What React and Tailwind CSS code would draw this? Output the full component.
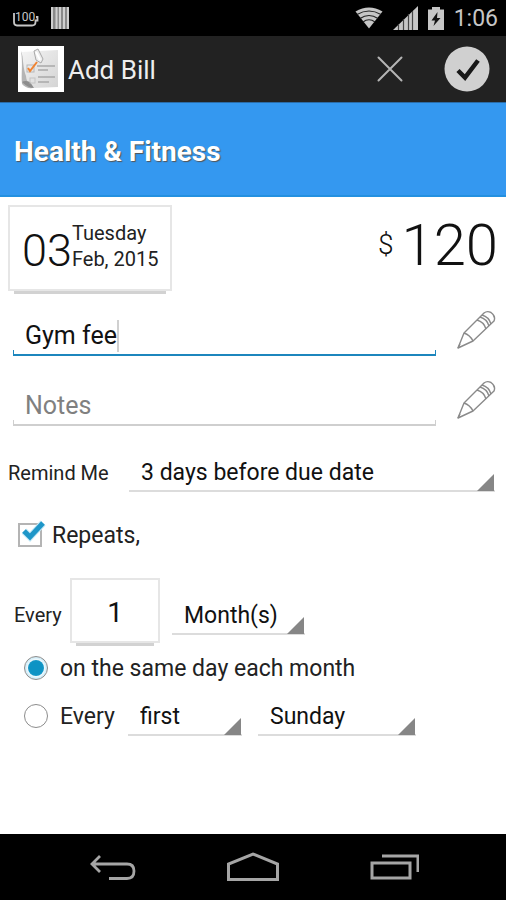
import { useState } from 'react';

function StatusBar() {
  return (
    <div className="flex h-9 items-center justify-between bg-black pl-3 pr-2 text-[#c6c6c6]">
      <div className="flex items-center gap-3">
        <svg width="27" height="20" viewBox="0 0 27 20" aria-hidden="true">
          <path d="M2 5V14Q2 17.500 5 17.500H20Q23.500 17.500 23.500 14V12.500H25.500V9H24" fill="none" stroke="currentColor" strokeWidth="1.800" />
          <text x="3" y="13" fontSize="12" fill="currentColor" fontFamily="Roboto, sans-serif">100</text>
        </svg>
        <svg width="18" height="22" viewBox="0 0 18 22" aria-hidden="true">
          <path d="M0 0H18V22H0Z" fill="#8a8a8a" />
          <path d="M1 0V22M5.500 0V22M9 0V22M13 0V22M17 0V22" stroke="#d0d0d0" strokeWidth="2" />
        </svg>
      </div>
      <div className="flex items-center gap-2.5">
        {/* wifi */}
        <svg width="28" height="22" viewBox="0 0 28 22" aria-hidden="true">
          <path d="M0.500 4.500Q14 -3.500 27.500 4.500L14 21.500Z" fill="currentColor" />
          <path d="M2 7.500Q14 0.500 26 7.500M5 11.500Q14 5.500 23 11.500M8 15Q14 10.500 20 15" fill="none" stroke="#222" strokeWidth="1.200" />
        </svg>
        {/* signal */}
        <svg width="25" height="24" viewBox="0 0 25 24" aria-hidden="true">
          <path d="M0 24L25 0V24Z" fill="currentColor" />
          <path d="M5.500 18V24M10.500 13V24M15.500 8V24M19.500 5V24" stroke="#444" strokeWidth="1.200" />
        </svg>
        <svg width="16" height="23" viewBox="0 0 16 23" aria-hidden="true">
          <path d="M4 2.500V0H12V2.500H16V23H0V2.500Z" fill="currentColor" />
          <path d="M9.500 5L3.500 13.500H7L5.500 19L12.500 11H9Z" fill="#111" />
        </svg>
        <span className="pt-0.5 text-[23px] leading-8">1:06</span>
      </div>
    </div>
  );
}

function AppIcon() {
  return (
    <svg width="46" height="46" viewBox="0 0 46 46" aria-hidden="true">
      <defs>
        <linearGradient id="paper" x1="0" y1="0" x2="1" y2="1">
          <stop offset="0" stopColor="#f4f4f4" />
          <stop offset="1" stopColor="#d4d4d4" />
        </linearGradient>
      </defs>
      <rect width="46" height="46" fill="#fff" />
      <path d="M3 5C5 17 3 29 4 38Q8 43 15 42C10 37 9 30 9 21Z" fill="#b5b5b5" />
      <path d="M4 6L40 4V41L15 42Q8 36 8 30C5 22 5 12 4 6Z" fill="url(#paper)" />
      <path d="M4 36Q10 42 16 42L12 36Q7 34 4 36Z" fill="#8d8d8d" />
      <path d="M19 20H37M20 24H30M20 31H37M20 36H31" stroke="#a9a9a9" strokeWidth="1.500" />
      <rect x="9" y="19" width="7" height="7" fill="none" stroke="#b8b8b8" />
      <rect x="12" y="32" width="5" height="5" fill="none" stroke="#c4c4c4" />
      <path d="M10 22L12 25L19 16" fill="none" stroke="#f08331" strokeWidth="2" />
      <path d="M16 5L20 3L25 13L23 17L18 14Z" fill="#eee" stroke="#a8a8a8" />
      <path d="M18 6L22 14" stroke="#fff" strokeWidth="2" />
    </svg>
  );
}

function PencilIcon() {
  return (
    <svg width="40" height="40" viewBox="0 0 40 40" fill="none" stroke="#8a8a8a" strokeWidth="1.400" strokeLinejoin="round" aria-hidden="true">
      <path d="M2 38L8 23L28 3Q31 0.500 35 2.500Q40 6 38 11L17 31Z" />
      <path d="M8 23Q14 25 17 31M21 10Q28 12 30 19M24 7Q31 9 33 16M26 5Q33 7 35 14M2 38L4 34" />
    </svg>
  );
}

function Spinner({ label, options, className }) {
  return (
    <div className={`relative ${className}`}>
      <select
        aria-label={label}
        className="block h-10 w-full appearance-none border-b-2 border-[#dcdcdc] bg-transparent pt-1 pl-3 text-[23px] leading-8 text-[#111] outline-none"
      >
        {options.map(o => (
          <option key={o}>{o}</option>
        ))}
      </select>
      <svg className="pointer-events-none absolute bottom-px right-px" width="17" height="17" viewBox="0 0 17 17" aria-hidden="true">
        <path d="M17 0V17H0Z" fill="#868686" />
      </svg>
    </div>
  );
}

function Field({ label, value, onChange, placeholder, active }) {
  return (
    <div className="flex items-start pl-[13px] pr-2.5">
      <label className="min-w-0 flex-1 pt-1.5">
        <span className="flex h-10 items-center pl-3">
          <input
            aria-label={label}
            value={value}
            onChange={e => onChange(e.target.value)}
            placeholder={placeholder}
            className="max-w-full bg-transparent text-[25px] leading-8 text-[#111] outline-none [field-sizing:content] placeholder:text-[#808080]"
          />
          {active && <span className="h-8 w-0.5 bg-[#d0d0d0]" />}
        </span>
        <span className={`-mt-1.5 block h-1.5 border-x border-b-2 ${active ? 'border-[#1c86bd]' : 'border-[#cfcfcf]'}`} />
      </label>
      <button type="button" aria-label={`Edit ${label}`} className="ml-5">
        <PencilIcon />
      </button>
    </div>
  );
}

function Radio({ id, checked, onChange }) {
  return (
    <input
      id={id}
      type="radio"
      name="repeat-mode"
      checked={checked}
      onChange={onChange}
      className="size-6 shrink-0 appearance-none rounded-full border border-[#8c8c8c] bg-white checked:bg-[#0d93c4] checked:bg-clip-content checked:p-[3px] checked:shadow-[inset_0_0_4px_#8fd3ef]"
    />
  );
}

export default function App() {
  const [name, setName] = useState('Gym fee');
  const [notes, setNotes] = useState('');
  const [repeats, setRepeats] = useState(true);
  const [every, setEvery] = useState('1');
  const [mode, setMode] = useState('same');

  return (
    <div className="flex min-h-screen flex-col bg-white font-[Roboto,sans-serif] text-[#222]">
      <StatusBar />

      {/* Action bar */}
      <header className="flex h-[66px] items-center bg-[#222] pl-[18px] pr-4">
        <AppIcon />
        <h1 className="ml-1 flex-1 pt-0.5 text-[26px] leading-8 text-[#eee]">Add Bill</h1>
        <button type="button" aria-label="Cancel" className="mr-10">
          <svg width="28" height="28" viewBox="0 0 28 28" aria-hidden="true">
            <path d="M2.500 2.500L25.500 25.500M25.500 2.500L2.500 25.500" stroke="#b5b5b5" strokeWidth="2" strokeLinecap="round" />
          </svg>
        </button>
        <button type="button" aria-label="Save">
          <svg width="46" height="46" viewBox="0 0 46 46" aria-hidden="true">
            <circle cx="23" cy="23" r="22.500" fill="#d0d0d0" />
            <path d="M14 24.500L21 31.500L34 14.500" fill="none" stroke="#181818" strokeWidth="4.500" />
          </svg>
        </button>
      </header>

      <div className="flex h-[95px] items-center border-t border-b-2 border-t-[#2a6ca8] border-b-[#2390e0] bg-[#3498f0] px-3.5 pt-1.5">
        <h2 className="text-[28px] font-bold leading-8 text-white [text-shadow:1px_1px_1px_#555]">Health &amp; Fitness</h2>
      </div>

      <main className="flex-1">
        {/* Date and amount */}
        <div className="flex items-start justify-between px-2 pt-2">
          <div>
            <button type="button" className="flex h-[86px] items-center border-2 border-[#e6e6e6] bg-white px-3 text-left">
              <span className="pt-1 text-[45px] leading-none font-light text-[#111]">03</span>
              <span className="pb-1 text-xl leading-[26px]">
                Tuesday
                <br />
                Feb, 2015
              </span>
            </button>
            <div className="mx-1.5 h-[3px] bg-[#d2d2d2]" />
          </div>
          <div className="flex h-20 items-center gap-2 text-[#111]">
            <span className="text-[28px] leading-8 font-light">$</span>
            <span className="text-[58px] leading-none font-light">120</span>
          </div>
        </div>

        <div className="flex flex-col gap-6 pt-4">
          <Field label="Name" value={name} onChange={setName} active />
          <Field label="Notes" value={notes} onChange={setNotes} placeholder="Notes" />
        </div>

        <div className="flex items-center pl-2 pr-[11px] pt-[26px]">
          <span className="w-[121px] pt-0.5 text-xl">Remind Me</span>
          <Spinner
            label="Remind Me"
            className="flex-1"
            options={['3 days before due date', '1 day before due date', 'On due date']}
          />
        </div>

        <label className="flex items-center gap-2.5 pl-[18px] pt-[26px] text-[23px] leading-8">
          <span className="relative flex">
            <input
              type="checkbox"
              checked={repeats}
              onChange={e => setRepeats(e.target.checked)}
              className="size-6 appearance-none border-2 border-[#b4b4b4] bg-white"
            />
            {repeats && (
              <svg className="pointer-events-none absolute -top-1 left-1" width="24" height="24" viewBox="0 0 24 24" aria-hidden="true">
                <path d="M2 12L8 18L21 4" fill="none" stroke="#c5e9f7" strokeWidth="7" />
                <path d="M2 12L8 18L21 4" fill="none" stroke="#1e96c8" strokeWidth="5" />
              </svg>
            )}
          </span>
          <span className="pt-0.5">Repeats,</span>
        </label>

        <div className="flex items-center pl-3.5 pt-[26px]">
          <label htmlFor="every" className="w-14 pt-1.5 text-xl">Every</label>
          <div>
            <input
              id="every"
              value={every}
              onChange={e => setEvery(e.target.value)}
              className="block h-[65px] w-[90px] border-2 border-[#e6e6e6] bg-white pt-1 text-center text-[28px] text-[#111] outline-none"
            />
            <div className="mx-1.5 h-[3px] bg-[#d2d2d2]" />
          </div>
          <Spinner label="Period" className="mt-1.5 ml-3 w-[133px]" options={['Month(s)', 'Week(s)', 'Year(s)']} />
        </div>

        <div className="flex h-11 items-center gap-3 pl-6 text-[23px]">
          <Radio id="same-day" checked={mode === 'same'} onChange={() => setMode('same')} />
          <label htmlFor="same-day" className="pt-0.5">on the same day each month</label>
        </div>
        <div className="flex h-13 items-center pl-6 text-[23px]">
          <Radio id="weekday" checked={mode === 'weekday'} onChange={() => setMode('weekday')} />
          <label htmlFor="weekday" className="ml-3 w-[68px] pt-0.5">Every</label>
          <Spinner label="Week" className="w-[114px]" options={['first', 'second', 'third', 'last']} />
          <Spinner label="Day" className="ml-4 w-[158px]" options={['Sunday', 'Monday', 'Friday']} />
        </div>
      </main>

      {/* Navigation bar */}
      <nav className="grid h-[66px] grid-cols-3 items-center justify-items-center bg-black px-[42px]">
        <button type="button" aria-label="Back">
          <svg width="48" height="28" viewBox="0 0 48 28" fill="none" stroke="#a5a5a5" strokeWidth="2.800" aria-hidden="true">
            <path d="M12 3L4 11L12 19M4 11H39Q46 11 46 18Q46 25.500 39 25.500H21" />
          </svg>
        </button>
        <button type="button" aria-label="Home">
          <svg width="54" height="30" viewBox="0 0 54 30" fill="none" stroke="#a5a5a5" strokeWidth="3" aria-hidden="true">
            <path d="M2.500 27.500V12L27 2L51.500 12V27.500Z" />
          </svg>
        </button>
        <button type="button" aria-label="Recent apps">
          <svg width="50" height="28" viewBox="0 0 50 28" fill="none" stroke="#a5a5a5" strokeWidth="3" aria-hidden="true">
            <path d="M3 10H41V25H3ZM13 3H49V19" />
          </svg>
        </button>
      </nav>
    </div>
  );
}
